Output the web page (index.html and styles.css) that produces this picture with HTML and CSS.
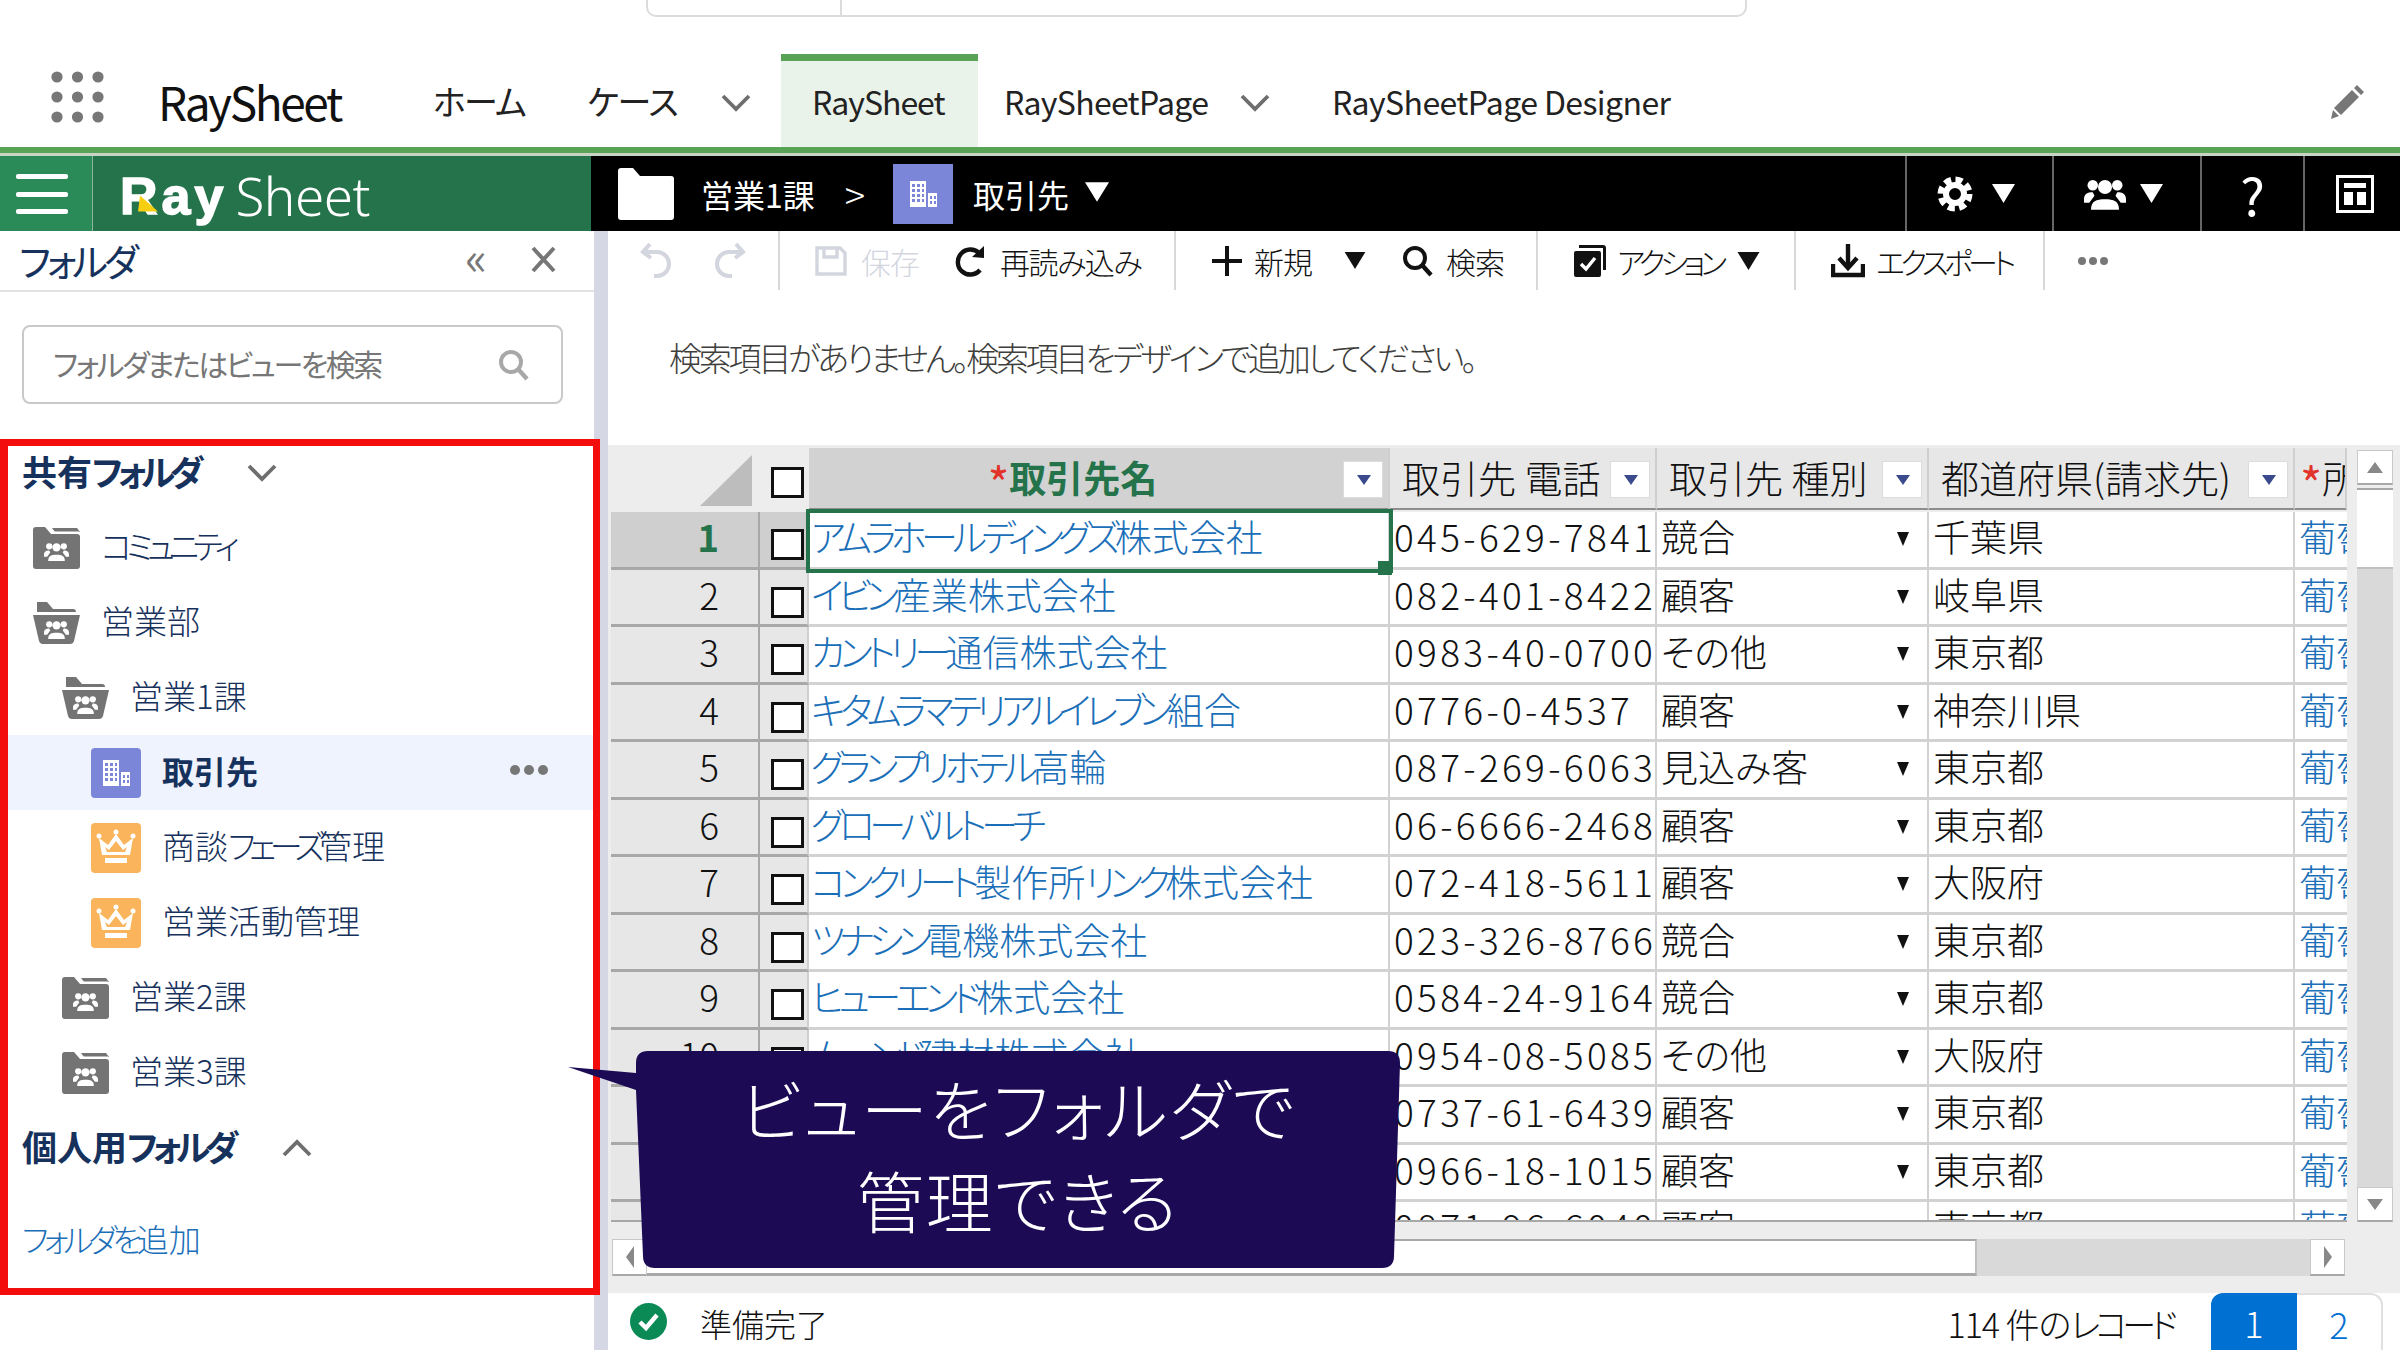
FILE: index.html
```html
<!DOCTYPE html>
<html lang="ja">
<head>
<meta charset="utf-8">
<title>RaySheet</title>
<link rel="stylesheet" href="styles.css">
</head>
<body>
<svg class="sprite" width="0" height="0">
  <symbol id="people" viewBox="0 0 24 20">
    <circle cx="12" cy="6" r="4"/><path d="M4 19c0-5 3-6 8-6s8 1 8 6z"/>
    <circle cx="5" cy="5" r="3"/><circle cx="19" cy="5" r="3"/>
    <path d="M0 13c0-3 2-4 5-4l1 2-3 4H0zM24 13c0-3-2-4-5-4l-1 2 3 4h3z"/>
  </symbol>
  <symbol id="folder-closed" viewBox="0 0 47 42">
    <path fill="#747474" d="M3 0h9l6 7h26q3 0 3 3v29q0 3-3 3H3q-3 0-3-3V3q0-3 3-3z"/>
    <path fill="#747474" d="M19 1h25l3 4H22z"/>
    <path fill="#fff" d="M18 4.500h28v1.500H19z"/>
    <use href="#people" x="11" y="14" width="25" height="21" fill="#fff"/>
  </symbol>
  <symbol id="folder-open" viewBox="0 0 47 42">
    <path fill="#747474" d="M4 0h10l6 7h20q3 0 3 3H4zM0 13h47l-6 26q-1 3-4 3H10q-3 0-4-3z"/>
    <use href="#people" x="11" y="17" width="25" height="21" fill="#fff"/>
  </symbol>
  <symbol id="building" viewBox="0 0 50 50">
    <path fill="#fff" d="M12 12h16v26H12zM30 24h9v14h-9z"/>
    <g fill="#7c86d8">
      <path d="M14 15h3v3h-3zM19 15h3v3h-3zM24 15h2v3h-2zM14 20h3v3h-3zM19 20h3v3h-3zM24 20h2v3h-2zM14 25h3v3h-3zM19 25h3v3h-3zM24 25h2v3h-2zM14 30h3v3h-3zM19 30h3v3h-3zM24 30h2v3h-2z"/>
      <path d="M32 27h2v3h-2zM36 27h2v3h-2zM32 32h2v3h-2zM36 32h2v3h-2z"/>
    </g>
  </symbol>
  <symbol id="crown" viewBox="0 0 50 50">
    <path fill="#fff" d="M8 15l9 7 8-11 8 11 9-7-3 17H11z"/>
    <path fill="#f9b45c" d="M14 24l4 3 7-9 7 9 4-3-2 5H16z"/>
    <path fill="#fff" d="M14 35h22v5H14z"/>
    <circle fill="#fff" cx="8" cy="13" r="2.500"/><circle fill="#fff" cx="25" cy="9" r="2.500"/><circle fill="#fff" cx="42" cy="13" r="2.500"/>
  </symbol>
  <symbol id="caret" viewBox="0 0 22 18"><path d="M0 0h22L11 18z"/></symbol>
  <symbol id="chevron" viewBox="0 0 30 18"><path d="M2 2l13 13L28 2" fill="none" stroke="#6e6e6e" stroke-width="3.800"/></symbol>
  <symbol id="magnifier" viewBox="0 0 32 32"><circle cx="13" cy="13" r="10" fill="none" stroke="currentColor" stroke-width="4"/><path d="M20 20l9 10" stroke="currentColor" stroke-width="4.400"/></symbol>
</svg>

<div class="url-stub"><div class="url-stub-tab"></div></div>

<nav class="topnav">
  <svg class="apps" viewBox="0 0 53 52" width="53" height="52" fill="#777">
    <circle cx="6" cy="6" r="5.600"/><circle cx="26.500" cy="6" r="5.600"/><circle cx="47" cy="6" r="5.600"/>
    <circle cx="6" cy="26" r="5.600"/><circle cx="26.500" cy="26" r="5.600"/><circle cx="47" cy="26" r="5.600"/>
    <circle cx="6" cy="46" r="5.600"/><circle cx="26.500" cy="46" r="5.600"/><circle cx="47" cy="46" r="5.600"/>
  </svg>
  <div class="brand">RaySheet</div>
  <a class="nav-item home">ホーム</a>
  <a class="nav-item cases">ケース</a>
  <svg class="nav-chevron cases-chevron" width="30" height="18"><use href="#chevron"/></svg>
  <a class="nav-item active">RaySheet</a>
  <a class="nav-item page">RaySheetPage</a>
  <svg class="nav-chevron page-chevron" width="30" height="18"><use href="#chevron"/></svg>
  <a class="nav-item designer">RaySheetPage Designer</a>
  <svg class="pencil" viewBox="0 0 36 36" width="36" height="36" fill="#777"><path d="M27 2l7 7-3 3-7-7zM22 7l7 7L11 32l-7-7zM3 27l6 6-8 3z"/></svg>
</nav>
<div class="nav-rule"></div>

<header class="appbar">
  <div class="burger"><span></span><span></span><span></span></div>
  <div class="logo"><span class="logo-ray">Ray<i class="logo-wedge"></i></span><span class="logo-sheet">Sheet</span></div>
  <div class="crumbs">
    <svg class="crumb-folder" viewBox="0 0 56 52" width="56" height="52"><path fill="#fff" d="M3 0h12l7 8h31q3 0 3 3v38q0 3-3 3H3q-3 0-3-3V3q0-3 3-3z"/><path fill="#fff" stroke="#000" stroke-width="2" d="M24 3h32"/></svg>
    <span class="crumb-text">営業1課</span>
    <span class="crumb-sep">&gt;</span>
    <svg class="crumb-view" width="60" height="60"><rect width="60" height="60" fill="#7c86d8"/><use href="#building" x="5" y="5" width="50" height="50"/></svg>
    <span class="crumb-text crumb-current">取引先</span>
    <svg class="crumb-caret" width="24" height="20" fill="#fff"><use href="#caret"/></svg>
  </div>
  <div class="appbar-tools">
    <div class="tool tool-gear">
      <svg viewBox="0 0 36 38" width="36" height="38"><circle cx="18" cy="19" r="14.500" fill="none" stroke="#fff" stroke-width="6" stroke-dasharray="7 4.400"/><circle cx="18" cy="19" r="9" fill="none" stroke="#fff" stroke-width="6"/></svg>
      <svg width="23" height="19" fill="#fff"><use href="#caret"/></svg>
    </div>
    <div class="tool tool-people">
      <svg width="42" height="36" fill="#fff"><use href="#people"/></svg>
      <svg width="23" height="19" fill="#fff"><use href="#caret"/></svg>
    </div>
    <div class="tool tool-help">?</div>
    <div class="tool tool-layout">
      <svg viewBox="0 0 38 38" width="38" height="38" fill="none" stroke="#fff" stroke-width="3"><rect x="1.500" y="1.500" width="35" height="35"/><path fill="#fff" stroke="none" d="M8 8h22v5H8zM8 17h9v13H8zM21 17h9v13h-9z"/></svg>
    </div>
  </div>
</header>

<main class="main">
  <aside class="sidebar">
    <div class="side-title">
      <h2>フォルダ</h2>
      <span class="side-collapse">«</span>
      <svg class="side-close" viewBox="0 0 27 27" width="27" height="27"><path d="M3 2l21 23M24 2L3 25" stroke="#777" stroke-width="4"/></svg>
    </div>
    <div class="side-search">
      <span>フォルダまたはビューを検索</span>
      <svg width="32" height="32" color="#a8a8a8"><use href="#magnifier"/></svg>
    </div>
    <div class="tree">
      <div class="tree-head"><span>共有<span class="kana">フォルダ</span></span><svg width="30" height="18"><use href="#chevron"/></svg></div>
      <div class="tree-row lv0"><svg class="fi" width="47" height="42"><use href="#folder-closed"/></svg><span class="kana">コミュニティ</span></div>
      <div class="tree-row lv0"><svg class="fi" width="47" height="42"><use href="#folder-open"/></svg>営業部</div>
      <div class="tree-row lv1"><svg class="fi" width="47" height="42"><use href="#folder-open"/></svg>営業1課</div>
      <div class="tree-row lv2 selected">
        <svg class="vi vi-building" width="50" height="50"><use href="#building"/></svg>
        <b>取引先</b>
        <span class="row-more"><i></i><i></i><i></i></span>
      </div>
      <div class="tree-row lv2"><svg class="vi vi-crown" width="50" height="50"><use href="#crown"/></svg><span>商談<span class="kana">フェーズ</span>管理</span></div>
      <div class="tree-row lv2"><svg class="vi vi-crown" width="50" height="50"><use href="#crown"/></svg>営業活動管理</div>
      <div class="tree-row lv1"><svg class="fi" width="47" height="42"><use href="#folder-closed"/></svg>営業2課</div>
      <div class="tree-row lv1"><svg class="fi" width="47" height="42"><use href="#folder-closed"/></svg>営業3課</div>
      <div class="tree-head"><span>個人用<span class="kana">フォルダ</span></span><svg class="flip" width="30" height="18"><use href="#chevron"/></svg></div>
      <a class="add-folder"><span class="kana">フォルダを</span>追加</a>
    </div>
  </aside>
  <div class="gutter"></div>

  <section class="content">
    <div class="toolbar">
      <div class="tb-group tb-history">
        <svg viewBox="0 0 34 38" width="34" height="38" fill="none" stroke="#d3d6df" stroke-width="4"><path d="M10 2L3 10l8 6M4 10h13a11 11 0 0 1 0 24h-3"/></svg>
        <svg viewBox="0 0 34 38" width="34" height="38" fill="none" stroke="#d3d6df" stroke-width="4"><path d="M24 2l7 8-8 6M30 10H17a11 11 0 0 0 0 24h3"/></svg>
      </div>
      <div class="tb-group tb-file">
        <svg class="save" viewBox="0 0 32 30" width="32" height="30" fill="none" stroke="#d3d6df" stroke-width="3.400"><path d="M2 2h23l5 5v21H2zM9 2v9h13V2"/></svg>
        <span class="muted">保存</span>
        <svg class="reload" viewBox="0 0 30 32" width="30" height="32" fill="none" stroke="#111" stroke-width="4.400"><path d="M25 25a12.500 12.500 0 1 1 -1-17"/><path fill="#111" stroke="none" d="M17 12L29 1v12z"/></svg>
        <span class="reload-label">再読み込み</span>
      </div>
      <div class="tb-group tb-record">
        <svg class="plus" viewBox="0 0 30 30" width="30" height="30" stroke="#111" stroke-width="4"><path d="M15 0v30M0 15h30"/></svg>
        <span>新規</span>
        <svg class="tb-caret" width="22" height="17" fill="#111"><use href="#caret"/></svg>
        <svg class="find" width="32" height="32" color="#111"><use href="#magnifier"/></svg>
        <span>検索</span>
      </div>
      <div class="tb-group tb-action">
        <svg viewBox="0 0 32 32" width="32" height="32"><path fill="#111" d="M5 0h24q3 0 3 3v22h-3V3H5zM2 6h23q2 0 2 2v22q0 2-2 2H2q-2 0-2-2V8q0-2 2-2z"/><path d="M7 19l5 5 9-11" fill="none" stroke="#fff" stroke-width="3.400"/></svg>
        <span>アクション</span>
        <svg class="tb-caret" width="23" height="18" fill="#111"><use href="#caret"/></svg>
      </div>
      <div class="tb-group tb-export">
        <svg viewBox="0 0 34 34" width="34" height="34" fill="none" stroke="#111" stroke-width="4.400"><path d="M2 20v11h30V20M17 0v22"/><path d="M8 14l9 10 9-10"/></svg>
        <span>エクスポート</span>
      </div>
      <div class="tb-more"><i></i><i></i><i></i></div>
    </div>

    <p class="search-note">検索項目がありません。検索項目をデザインで追加してください。</p>

    <div class="sheet">
      <div class="sheet-top">
        <div class="grid">
          <div class="row head">
            <div class="corner"><i></i></div>
            <div class="chk"><b></b></div>
            <div class="hd hd-name"><span><em>*</em>取引先名</span><u></u></div>
            <div class="hd">取引先 電話<u></u></div>
            <div class="hd">取引先 種別<u></u></div>
            <div class="hd">都道府県(請求先)<u></u></div>
            <div class="hd hd-clip"><em>*</em>所</div>
          </div>
          <div class="row current"><div class="num">1</div><div class="chk"><b></b></div><div class="name cell-on"><a><span class="kana">アムラホールディングズ</span>株式会社</a><i class="handle"></i></div><div class="tel">045-629-7841</div><div class="type">競合<s></s></div><div class="pref">千葉県</div><div class="own"><a>葡萄</a></div></div>
          <div class="row"><div class="num">2</div><div class="chk"><b></b></div><div class="name"><a><span class="kana">イビン</span>産業株式会社</a></div><div class="tel">082-401-8422</div><div class="type">顧客<s></s></div><div class="pref">岐阜県</div><div class="own"><a>葡萄</a></div></div>
          <div class="row"><div class="num">3</div><div class="chk"><b></b></div><div class="name"><a><span class="kana">カントリー</span>通信株式会社</a></div><div class="tel">0983-40-0700</div><div class="type">その他<s></s></div><div class="pref">東京都</div><div class="own"><a>葡萄</a></div></div>
          <div class="row"><div class="num">4</div><div class="chk"><b></b></div><div class="name"><a><span class="kana">キタムラマテリアルイレブン</span>組合</a></div><div class="tel">0776-0-4537</div><div class="type">顧客<s></s></div><div class="pref">神奈川県</div><div class="own"><a>葡萄</a></div></div>
          <div class="row"><div class="num">5</div><div class="chk"><b></b></div><div class="name"><a><span class="kana">グランプリホテル</span>高輪</a></div><div class="tel">087-269-6063</div><div class="type">見込み客<s></s></div><div class="pref">東京都</div><div class="own"><a>葡萄</a></div></div>
          <div class="row"><div class="num">6</div><div class="chk"><b></b></div><div class="name"><a><span class="kana">グローバルトーチ</span></a></div><div class="tel">06-6666-2468</div><div class="type">顧客<s></s></div><div class="pref">東京都</div><div class="own"><a>葡萄</a></div></div>
          <div class="row"><div class="num">7</div><div class="chk"><b></b></div><div class="name"><a><span class="kana">コンクリート</span>製作所<span class="kana">リンク</span>株式会社</a></div><div class="tel">072-418-5611</div><div class="type">顧客<s></s></div><div class="pref">大阪府</div><div class="own"><a>葡萄</a></div></div>
          <div class="row"><div class="num">8</div><div class="chk"><b></b></div><div class="name"><a><span class="kana">ツナシン</span>電機株式会社</a></div><div class="tel">023-326-8766</div><div class="type">競合<s></s></div><div class="pref">東京都</div><div class="own"><a>葡萄</a></div></div>
          <div class="row"><div class="num">9</div><div class="chk"><b></b></div><div class="name"><a><span class="kana">ヒューエンド</span>株式会社</a></div><div class="tel">0584-24-9164</div><div class="type">競合<s></s></div><div class="pref">東京都</div><div class="own"><a>葡萄</a></div></div>
          <div class="row"><div class="num">10</div><div class="chk"><b></b></div><div class="name"><a><span class="kana">ムーンド</span>建材株式会社</a></div><div class="tel">0954-08-5085</div><div class="type">その他<s></s></div><div class="pref">大阪府</div><div class="own"><a>葡萄</a></div></div>
          <div class="row"><div class="num">11</div><div class="chk"><b></b></div><div class="name"></div><div class="tel">0737-61-6439</div><div class="type">顧客<s></s></div><div class="pref">東京都</div><div class="own"><a>葡萄</a></div></div>
          <div class="row"><div class="num">12</div><div class="chk"><b></b></div><div class="name"></div><div class="tel">0966-18-1015</div><div class="type">顧客<s></s></div><div class="pref">東京都</div><div class="own"><a>葡萄</a></div></div>
          <div class="row"><div class="num">13</div><div class="chk"><b></b></div><div class="name"></div><div class="tel">0871-96-6040</div><div class="type">顧客<s></s></div><div class="pref">東京都</div><div class="own"><a>葡萄</a></div></div>
        </div>
        <div class="vbar">
          <div class="sb-btn"><i class="arrow-up"></i></div>
          <div class="vbar-thumb"></div>
          <div class="vbar-track"></div>
          <div class="sb-btn sb-down"><i class="arrow-down"></i></div>
        </div>
      </div>
      <div class="hbar">
        <div class="sb-btn sb-h"><i class="arrow-left"></i></div>
        <div class="hbar-thumb"></div>
        <div class="sb-btn sb-h"><i class="arrow-right"></i></div>
      </div>
    </div>

    <footer class="status">
      <svg viewBox="0 0 37 37" width="37" height="37"><circle cx="18.500" cy="18.500" r="18.500" fill="#0b8a55"/><path d="M10 19l6 6 11-13" fill="none" stroke="#fff" stroke-width="4.500"/></svg>
      <span class="status-text">準備完了</span>
      <span class="status-count">114 件の<span class="kana">レコード</span></span>
      <div class="pager"><span class="page-on">1</span><span>2</span></div>
    </footer>
  </section>
</main>

<div class="red-frame"></div>

<div class="callout">
  <svg viewBox="0 0 832 217" width="832" height="217"><path fill="#1c0a55" d="M0 16L68 22V12Q68 0 80 0H820Q832 0 832 12L826 205Q826 217 814 217H87Q75 217 75 205L68 39z"/></svg>
  <p>ビューをフォルダで<br>管理できる</p>
</div>
</body>
</html>
```
FILE: styles.css
```css
html, body{
    margin: 0;
    height: 1350px;
    overflow: hidden;
}

body{
    position: relative;
    width: 2400px;
    font-family: "Noto Sans CJK JP", "Noto Sans", sans-serif;
    font-feature-settings: "palt";
    color: #111;
    background: #fff;
}

.sprite{
    position: absolute;
}

svg{
    display: block;
    flex: none;
}

/* top strip */
.url-stub{
    height: 17px;
    width: 1101px;
    margin: 0 0 37px 646px;
    box-sizing: border-box;
    border: 2px solid #dcdcdc;
    border-top: none;
    border-radius: 0 0 10px 10px;
}

.url-stub-tab{
    width: 192px;
    height: 15px;
    border-right: 2px solid #dcdcdc;
}

.topnav{
    display: flex;
    align-items: center;
    height: 93px;
    font-size: 34px;
    letter-spacing: -0.5px;
}

.apps{
    margin: -8px 0 0 51px;
}

.brand{
    margin-left: 54px;
    width: 184px;
    font-size: 46px;
    letter-spacing: -2.4px;
    white-space: nowrap;
}

.nav-item{
    color: #222;
    white-space: nowrap;
}

.home{ margin-left: 91px; width: 95px; letter-spacing: -1.7px; }
.cases{ margin-left: 59px; width: 96px; letter-spacing: -1.2px; }
.nav-chevron{ margin-top: 4px; }
.cases-chevron{ margin-left: 38px; }

.nav-item.active{
    align-self: stretch;
    display: flex;
    align-items: center;
    box-sizing: border-box;
    width: 197px;
    margin-left: 30px;
    padding: 0 0 7px 31px;
    background: #eaf3ea;
    border-top: 7px solid #58a355;
    font-size: 32px;
    letter-spacing: -1px;
}

.page{ margin-left: 26px; width: 236px; font-size: 32px; letter-spacing: -0.7px; }
.designer{ margin-left: 62px; width: 337px; font-size: 32px; letter-spacing: -0.6px; }
.pencil{ margin-left: auto; margin-right: 34px; }

.nav-rule{
    height: 6px;
    background: #58a355;
    border-bottom: 3px solid #c9d3c6;
}

/* dark app bar */
.appbar{
    display: flex;
    height: 75px;
    background: #000;
    color: #fff;
}

.burger{
    box-sizing: border-box;
    width: 93px;
    padding: 18px 24px 17px 16px;
    display: flex;
    flex-direction: column;
    justify-content: space-between;
    background: #2a8a58;
    border-right: 1px solid #8fb79e;
}

.burger span{
    height: 5px;
    background: #fff;
    border-radius: 2px;
}

.logo{
    box-sizing: border-box;
    width: 498px;
    padding: 4px 0 0 27px;
    display: flex;
    align-items: center;
    gap: 8px;
    background: #24734a;
    line-height: 1;
}

.logo-ray{
    position: relative;
    font-family: "Liberation Sans", sans-serif;
    font-size: 52px;
    font-weight: 700;
    letter-spacing: 4px;
    -webkit-text-stroke: 1.5px #fff;
}

.logo-wedge{
    position: absolute;
    left: 18px;
    bottom: 10px;
    width: 20px;
    height: 16px;
    background: #f6cf10;
    clip-path: polygon(10% 0, 100% 100%, 0 100%);
}

.logo-sheet{
    font-family: "Noto Sans", sans-serif;
    font-size: 53px;
    font-weight: 300;
    letter-spacing: -0.5px;
}

.crumbs{
    display: flex;
    align-items: center;
    padding-left: 27px;
}

.crumb-text{
    margin-left: 27px;
    font-size: 32px;
    white-space: nowrap;
}

.crumb-sep{
    margin-left: 30px;
    font-size: 38px;
    font-weight: 300;
}

.crumb-view{ margin-left: 28px; }
.crumb-current{ margin-left: 20px; }
.crumb-caret{ margin-left: 16px; margin-top: -4px; }

.appbar-tools{
    display: flex;
    margin-left: auto;
}

.tool{
    box-sizing: border-box;
    display: flex;
    align-items: center;
    justify-content: center;
    gap: 19px;
    border-left: 2px solid #666;
    height: 75px;
}

.tool-gear{ width: 147px; padding-right: 7px; }
.tool-people{ width: 148px; gap: 14px; padding-right: 8px; }
.tool-help{ width: 103px; font-size: 52px; }
.tool-layout{ width: 97px; justify-content: flex-start; padding-left: 31px; }

/* page body */
.main{
    display: flex;
    height: 1119px;
}

.sidebar{
    width: 594px;
    flex: none;
}

.gutter{
    width: 14px;
    background: #d5d8e4;
    flex: none;
}

.side-title{
    display: flex;
    align-items: center;
    height: 61px;
    padding: 0 37px 2px 19px;
    box-sizing: border-box;
    border-bottom: 2px solid #e2e2e2;
}

.side-title h2{
    margin: 0;
    font-size: 38px;
    font-weight: 400;
    letter-spacing: -4px;
    color: #16325c;
}

.side-collapse{
    margin: -10px 0 0 auto;
    font-size: 46px;
    color: #777;
    line-height: 1;
}

.side-close{ margin-left: 43px; }

.side-search{
    box-sizing: border-box;
    display: flex;
    align-items: center;
    justify-content: space-between;
    height: 79px;
    margin: 33px 31px 0 22px;
    padding: 0 31px 3px 29px;
    border: 2px solid #c9c9c9;
    border-radius: 8px;
    font-size: 30px;
    letter-spacing: -2.5px;
    color: #777;
}

.side-search svg{ margin-bottom: -3px; }

.tree{
    margin-top: 31px;
    color: #16325c;
    font-size: 33px;
    font-weight: 300;
}

.tree .kana{
    letter-spacing: -0.19em;
}

.tree-head{
    box-sizing: border-box;
    display: flex;
    align-items: center;
    gap: 49px;
    height: 75px;
    padding: 0 0 5px 22px;
    font-size: 35px;
    font-weight: 700;
}

.tree .tree-head .kana{ letter-spacing: -5.5px; }
.tree-head svg{ margin-bottom: -5px; }

.flip{ transform: scaleY(-1); }

.tree-row{
    box-sizing: border-box;
    display: flex;
    align-items: center;
    gap: 21px;
    height: 75px;
    padding-bottom: 6px;
}

.tree-row svg{ margin-bottom: -6px; }

.lv0{ padding-left: 33px; }
.lv1{ padding-left: 62px; }
.lv2{ padding-left: 91px; }

.selected{
    margin: 0 1px 0 8px;
    padding-left: 83px;
    background: #eef3fd;
}

.selected b{ font-weight: 700; font-size: 32px; }

.vi{
    border-radius: 4px;
}

.vi-building{ background: #7c86d8; }
.vi-crown{ background: #f9b45c; }

.row-more{
    display: flex;
    gap: 4px;
    margin: 0 45px 0 auto;
}

.row-more i, .tb-more i{
    width: 10px;
    height: 10px;
    border-radius: 50%;
    background: #777;
}

.add-folder{
    box-sizing: border-box;
    display: flex;
    align-items: center;
    height: 75px;
    margin-top: 18px;
    padding: 0 0 6px 22px;
    color: #1b6fb8;
    font-size: 32px;
}

.tree .add-folder .kana{ letter-spacing: -0.16em; }

/* toolbar */
.content{
    flex: 1;
    display: flex;
    flex-direction: column;
}

.toolbar{
    display: flex;
    height: 59px;
    font-size: 30px;
    font-weight: 300;
    letter-spacing: -1px;
}

.tb-group{
    box-sizing: border-box;
    display: flex;
    align-items: center;
    border-right: 2px solid #d8d8d8;
    white-space: nowrap;
}

.tb-history{ width: 172px; padding-left: 32px; gap: 38px; }
.tb-file{ width: 396px; padding-left: 35px; }
.tb-file .muted{ margin-left: 14px; color: #d3d6df; width: 94px; }
.tb-file .reload-label{ margin-left: 15px; letter-spacing: -1.5px; }
.tb-record{ width: 362px; padding-left: 36px; }
.tb-record span{ margin-left: 12px; }
.tb-record .tb-caret{ margin-left: 32px; }
.tb-record .find{ margin-left: 36px; }
.tb-action{ width: 258px; padding-left: 36px; }
.tb-action span{ margin-left: 11px; letter-spacing: -5px; }
.tb-action .tb-caret{ margin-left: 15px; }
.tb-export{ width: 249px; padding-left: 35px; }
.tb-export span{ margin-left: 11px; letter-spacing: -4.6px; }

.tb-more{
    display: flex;
    align-items: center;
    gap: 3px;
    padding-left: 33px;
}

.tb-more i{
    width: 8px;
    height: 8px;
}

.search-note{
    height: 155px;
    margin: 0;
    padding: 43px 0 0 61px;
    box-sizing: border-box;
    font-size: 33px;
    font-weight: 300;
    letter-spacing: -3.2px;
    color: #3e3e3c;
}

/* sheet */
.sheet{
    height: 848px;
    padding-top: 3px;
    box-sizing: border-box;
    background: #ededed;
}

.sheet-top{
    display: flex;
    padding-left: 3px;
}

.grid{
    width: 1736px;
    height: 774px;
    overflow: hidden;
    border-bottom: 2px solid #a8a8a8;
    box-sizing: border-box;
}

.row{
    display: grid;
    grid-template-columns: 149px 49px 581px 267px 272px 366px 52px;
    height: 57.5px;
    font-size: 37px;
    line-height: 49px;
    white-space: nowrap;
}

.row > div{
    box-sizing: border-box;
    border-bottom: 3px solid #d2d2d2;
    background: #fff;
}

.row.head{
    height: 64px;
    font-size: 38px;
    line-height: 58px;
}

.row.head > div{
    position: relative;
    background: #e7e7e7;
    border-bottom: 2px solid #8d8d8d;
    border-right: 2px solid #cfcfcf;
    margin-bottom: 2px;
    font-weight: 300;
}

.row.head > .corner, .row.head > .chk{
    border-bottom: none;
    border-right: none;
    background: #ededed;
}

.corner i{
    position: absolute;
    left: 89px;
    top: 7px;
    width: 52px;
    height: 51px;
    background: #bdbdbd;
    clip-path: polygon(100% 0, 100% 100%, 0 100%);
}

.hd{
    padding-left: 12px;
}

.hd u{
    position: absolute;
    right: 5px;
    top: 13px;
    width: 40px;
    height: 37px;
    background: #fff;
    border: 1px solid #dcdcdc;
    box-sizing: border-box;
}

.hd u::after{
    content: "";
    position: absolute;
    left: 13px;
    top: 13px;
    border: 7px solid transparent;
    border-top: 10px solid #3b4a8c;
    border-bottom: none;
}

.row.head > .hd-name{
    background: #d2d2d2;
    text-align: center;
    color: #24734a;
    font-size: 37px;
    font-weight: 700;
    padding: 0;
}

.hd-name span{ margin-left: -52px; }

em{
    font-style: normal;
    font-weight: 400;
    font-size: 1.25em;
    line-height: 1;
    vertical-align: -0.2em;
    color: #e2332b;
}

.hd-clip{
    overflow: hidden;
    padding-left: 5px;
}

.num{
    padding-right: 39px;
    text-align: right;
    border-right: 2px solid #a8a8a8;
    font-weight: 300;
}

.row > .num, .row > .chk{
    background: #e7e7e7;
    border-bottom-color: #a8a8a8;
}

.row > .chk{
    position: relative;
    border-right: 2px solid #cfcfcf;
}

.chk b{
    position: absolute;
    left: 11px;
    top: 17px;
    width: 33px;
    height: 31px;
    box-sizing: border-box;
    background: #fff;
    border: 3px solid #111;
}

.row.head .chk b{ top: 19px; }

.row.current > .num, .row.current > .chk{
    background: #cfcfcf;
}

.row.current > .num{
    color: #24734a;
    font-weight: 700;
}

.name, .tel, .type, .pref, .own{
    border-right: 2px solid #d2d2d2;
    font-weight: 300;
}

a{
    color: #1b6fb8;
}

.name{
    position: relative;
    padding-left: 2px;
}

.name .kana{
    letter-spacing: -0.15em;
}

.row > .cell-on{
    outline: 4px solid #24734a;
    outline-offset: -1px;
    z-index: 1;
}

.handle{
    position: absolute;
    right: -4px;
    bottom: -8px;
    width: 14px;
    height: 14px;
    background: #24734a;
}

.tel{
    padding-left: 4px;
    letter-spacing: 3.3px;
}

.type{
    position: relative;
    padding-left: 4px;
}

.type s{
    position: absolute;
    left: 240px;
    top: 20px;
    border: 6px solid transparent;
    border-top: 14px solid #111;
    border-bottom: none;
}

.pref{ padding-left: 4px; }

.own{
    overflow: hidden;
    padding-left: 4px;
    border-right: none;
}

/* scrollbars */
.vbar{
    display: flex;
    flex-direction: column;
    width: 36px;
    height: 772px;
    margin: 2px 0 0 10px;
}

.sb-btn{
    box-sizing: border-box;
    display: flex;
    align-items: center;
    justify-content: center;
    height: 35px;
    background: #fff;
    border: 1px solid #c9c9c9;
    border-bottom: 2px solid #a8a8a8;
    flex: none;
}

.vbar-thumb{
    box-sizing: border-box;
    height: 81px;
    margin-top: 3px;
    background: #fff;
    border-top: 2px solid #a8a8a8;
    border-bottom: 2px solid #c0c0c0;
}

.vbar-track{
    flex: 1;
    background: #d9d9d9;
}

.arrow-up, .arrow-down{
    border-left: 8px solid transparent;
    border-right: 8px solid transparent;
}

.arrow-up{ border-bottom: 11px solid #888; }
.arrow-down{ border-top: 11px solid #888; }

.arrow-left, .arrow-right{
    border-top: 11px solid transparent;
    border-bottom: 11px solid transparent;
}

.arrow-left{ border-right: 8px solid #888; }
.arrow-right{ border-left: 8px solid #888; }

.hbar{
    display: flex;
    width: 1733px;
    height: 37px;
    margin: 17px 0 0 4px;
    background: #d9d9d9;
}

.sb-h{
    width: 35px;
    height: 37px;
}

.hbar-thumb{
    box-sizing: border-box;
    width: 1330px;
    margin-right: auto;
    background: #fff;
    border-top: 2px solid #a8a8a8;
    border-bottom: 3px solid #a8a8a8;
    border-right: 2px solid #c0c0c0;
}

/* status bar */
.status{
    display: flex;
    align-items: center;
    height: 57px;
    padding-left: 22px;
    font-size: 32px;
    font-weight: 300;
}

.status-text{ margin-left: 33px; margin-top: 2px; }

.status-count{
    margin: 3px 0 0 auto;
    font-size: 34px;
    letter-spacing: -1px;
}

.status-count .kana{ letter-spacing: -5px; }

.pager{
    display: flex;
    align-self: stretch;
    margin: 0 17px 0 38px;
    font-size: 36px;
    color: #0070d2;
}

.pager span{
    box-sizing: border-box;
    width: 86px;
    display: flex;
    align-items: center;
    justify-content: center;
    border: 2px solid #e0e0e0;
    border-bottom: none;
    border-left: none;
    border-radius: 0 12px 0 0;
}

.pager .page-on{
    background: #0070d2;
    color: #fff;
    border: none;
    border-radius: 12px 0 0 0;
}

/* overlays */
.red-frame{
    position: absolute;
    left: 0;
    top: 439px;
    width: 600px;
    height: 856px;
    box-sizing: border-box;
    border: 7px solid #f40d0d;
    border-left-width: 8px;
}

.callout{
    position: absolute;
    left: 568px;
    top: 1051px;
    width: 832px;
    height: 217px;
}

.callout p{
    position: absolute;
    left: 68px;
    right: 0;
    top: 10px;
    margin: 0;
    text-align: center;
    color: #fff;
    font-size: 67px;
    font-weight: 300;
    letter-spacing: 1.8px;
    line-height: 92px;
}
```
